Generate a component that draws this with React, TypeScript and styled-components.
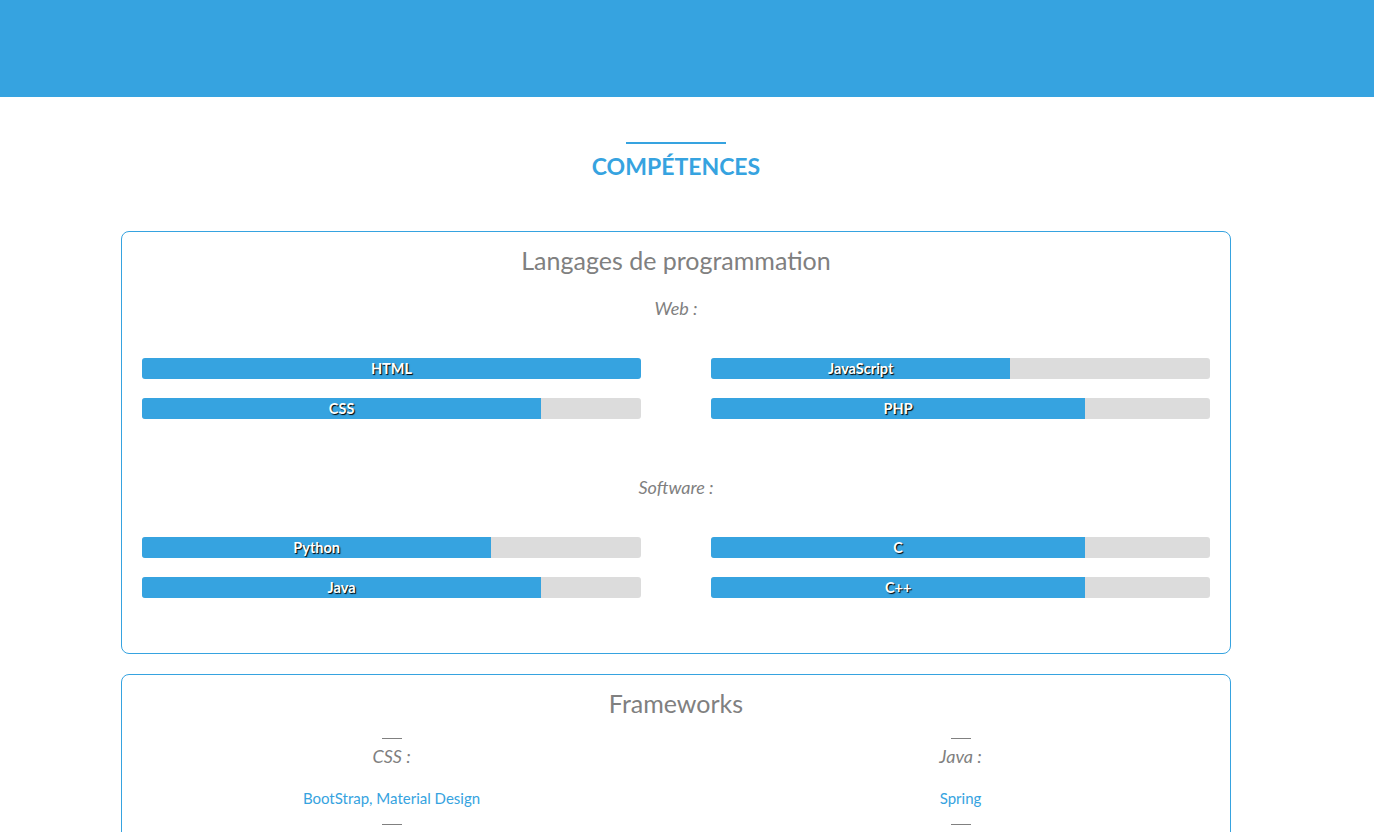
import React from "react";
import styled, { createGlobalStyle } from "styled-components";

const Global = createGlobalStyle`
    body {
        margin: 0;
        font-family: Lato, "Open Sans", sans-serif;
        background: #fff;
    }
`;

const Header = styled.header`
    height: 97px;
    background: #36a3e0;
`;

const Section = styled.section`
    display: flex;
    flex-direction: column;
    align-items: center;
    padding: 45px 22px 0 0;
`;

const SectionTitle = styled.h2`
    margin: 0 0 53px;
    color: #36a3e0;
    font-size: 23px;
    font-weight: 700;
    line-height: 1;
    text-align: center;
    &::before {
        content: "";
        display: block;
        width: 100px;
        height: 2px;
        margin: 0 auto 11px;
        background: #36a3e0;
    }
`;

const Card = styled.div`
    box-sizing: border-box;
    width: 1110px;
    border: 1px solid #36a3e0;
    border-radius: 8px;
    padding: 13px 20px 55px;
    margin-bottom: 20px;
`;

const CardTitle = styled.h3`
    margin: 0;
    color: #808080;
    font-size: 25px;
    font-weight: 400;
    line-height: 30px;
    text-align: center;
`;

const SubTitle = styled.h4`
    margin: 22px 0 0;
    color: #808080;
    font-size: 18px;
    font-weight: 400;
    font-style: italic;
    line-height: 22px;
    text-align: center;
`;

const BarGrid = styled.div`
    display: grid;
    grid-template-columns: 1fr 1fr;
    column-gap: 70px;
    row-gap: 19px;
    margin-top: 39px;
    margin-bottom: 57px;
    &:last-child {
        margin-bottom: 0;
    }
`;

const Track = styled.div`
    height: 21px;
    border-radius: 3px;
    background: #dcdcdc;
    overflow: hidden;
`;

const Fill = styled.div`
    height: 100%;
    background: #36a3e0;
    color: #fff;
    font-size: 14.5px;
    font-weight: 700;
    line-height: 21px;
    text-align: center;
    text-shadow: 1px 1px 1px #000;
    white-space: nowrap;
`;

const FwGrid = styled.div`
    display: grid;
    grid-template-columns: 1fr 1fr;
    column-gap: 70px;
    margin-top: 20px;
`;

const FwCol = styled.div`
    display: flex;
    flex-direction: column;
    align-items: center;
`;

const Rule = styled.span`
    display: block;
    width: 20px;
    height: 1px;
    background: #808080;
`;

const FwLabel = styled.div`
    margin-top: 6px;
    color: #808080;
    font-size: 18px;
    font-style: italic;
    line-height: 22px;
`;

const FwValue = styled.div`
    margin: 22px 0 17px;
    color: #36a3e0;
    font-size: 15px;
    line-height: 18px;
`;

type Skill = { name: string; level: number };

const web: Skill[] = [
    { name: "HTML", level: 100 },
    { name: "JavaScript", level: 60 },
    { name: "CSS", level: 80 },
    { name: "PHP", level: 75 },
];

const software: Skill[] = [
    { name: "Python", level: 70 },
    { name: "C", level: 75 },
    { name: "Java", level: 80 },
    { name: "C++", level: 75 },
];

const frameworks = [
    { label: "CSS :", value: "BootStrap, Material Design" },
    { label: "Java :", value: "Spring" },
];

const Bars = ({ skills }: { skills: Skill[] }) => (
    <BarGrid>
        {skills.map((s) => (
            <Track key={s.name}>
                <Fill style={{ width: `${s.level}%` }}>{s.name}</Fill>
            </Track>
        ))}
    </BarGrid>
);

export default function App() {
    return (
        <>
            <Global />
            <Header />
            <Section>
                <SectionTitle>COMPÉTENCES</SectionTitle>

                <Card>
                    <CardTitle>Langages de programmation</CardTitle>
                    <SubTitle>Web :</SubTitle>
                    <Bars skills={web} />
                    <SubTitle>Software :</SubTitle>
                    <Bars skills={software} />
                </Card>

                <Card>
                    <CardTitle>Frameworks</CardTitle>
                    <FwGrid>
                        {frameworks.map((f) => (
                            <FwCol key={f.label}>
                                <Rule />
                                <FwLabel>{f.label}</FwLabel>
                                <FwValue>{f.value}</FwValue>
                                <Rule />
                            </FwCol>
                        ))}
                    </FwGrid>
                </Card>
            </Section>
        </>
    );
}
